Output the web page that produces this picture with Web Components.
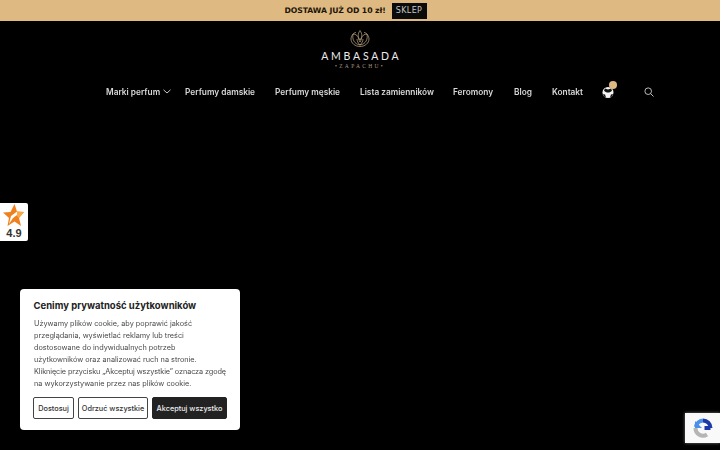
<!DOCTYPE html>
<html lang="pl"><head><meta charset="utf-8"><title>Ambasada Zapachu</title>
<style>
html,body{margin:0;padding:0;height:100%;background:#000;overflow:hidden}
body{font-family:"Inter","Liberation Sans",sans-serif}
</style></head><body>
<promo-bar></promo-bar>
<site-header></site-header>
<rating-badge></rating-badge>
<cookie-box></cookie-box>
<recaptcha-badge></recaptcha-badge>
<script>
function def(name,html){
  customElements.define(name,class extends HTMLElement{
    constructor(){super();this.attachShadow({mode:'open'}).innerHTML=html;}
  });
}
def('promo-bar',`<style>
:host{display:flex;height:21px;background:#dfb982;align-items:center;justify-content:center;gap:7px;padding-right:9px;font-family:"DejaVu Sans",sans-serif;color:#1b1408;box-sizing:border-box}
b{font-size:7.7px;width:100px;white-space:nowrap;letter-spacing:-.07px;font-weight:700}
span{display:flex;align-items:center;justify-content:center;width:35px;height:16px;background:#0b0b0b;color:#c4c4c4;font-size:8px;letter-spacing:.4px}
</style><b>DOSTAWA JUŻ OD 10 zł!</b><span>SKLEP</span>`);
def('site-header',`<style>
:host{display:block;color:#eee;font-family:"Inter","Liberation Sans",sans-serif}
.logo{display:flex;flex-direction:column;align-items:center;padding-top:8px;height:53px}
svg.mark{width:20px;height:19px;display:block}
.name{font-family:"Lato","Liberation Sans",sans-serif;font-weight:400;font-size:10.5px;letter-spacing:2.75px;margin-right:-2.75px;color:#ececec;line-height:12px;margin-top:2px}
.sub{font-family:"Liberation Serif",serif;font-size:5.500px;letter-spacing:2.3px;color:#a99a80;line-height:7px;margin-top:1px}
nav{display:flex;align-items:center;height:20px;padding-left:106px;font-size:8.3px;font-weight:600;white-space:nowrap;will-change:transform}
nav a{display:block;color:#d8d8d8}
.chev{width:8px;height:5px;margin:0 0 1px 3px;display:block}
.cart{position:relative;width:14px;height:14px;margin-left:18px}
.dot{position:absolute;left:7.500px;top:-4px;width:8px;height:8px;border-radius:50%;background:#dfb982}
.srch{width:10px;height:10px;margin-left:29px;margin-top:-1px}
</style>
<div class="logo">
<svg class="mark" viewBox="0 0 20 19" fill="none" stroke="#c7b08a" stroke-width=".7">
<path d="M10 1.500C7.500 5 7.500 9 10 13c2.500-4 2.500-8 0-11.500z"/>
<path d="M10 16C4 15 2 10 3 5c3 0 5 2 7 6 2-4 4-6 7-6 1 5-1 10-7 11z"/>
<path d="M6 3.500C3.500 3.500 1 7 1 10c0 4 4 7.500 9 7.500s9-3.500 9-7.500c0-3-2.500-6.500-5-6.500"/>
<path d="M10 16c-2-2-3-4-3-6M10 16c2-2 3-4 3-6"/>
</svg>
<div class="name">AMBASADA</div>
<div class="sub">•ZAPACHU•</div>
</div>
<nav>
<a style="width:54px">Marki perfum</a>
<svg class="chev" viewBox="0 0 8 5" fill="none" stroke="#ddd" stroke-width=".9"><path d="M.5 .8 4 4 7.500 .8"/></svg>
<a style="margin-left:14px;width:70px">Perfumy damskie</a>
<a style="margin-left:20px;width:65px">Perfumy męskie</a>
<a style="margin-left:20px;width:74px">Lista zamienników</a>
<a style="margin-left:19px;width:41px">Feromony</a>
<a style="margin-left:20px;width:18px">Blog</a>
<a style="margin-left:20px;width:31px">Kontakt</a>
<div class="cart"><svg viewBox="0 0 14 14" width="14" height="14"><circle cx="7" cy="7.500" r="5.500" fill="#f4f4f4"/><path d="M3 5.500c1 1.500 2.500 2 4 2s3-.5 4-2l-1-2-3 1-3-1zM2 9l2 .5 1 3-2-1zM12 9l-2 .5-1 3 2-1z" fill="#111"/></svg><span class="dot"></span></div>
<svg class="srch" viewBox="0 0 10 10" fill="none" stroke="#cfcfcf" stroke-width=".9"><circle cx="4.200" cy="4.200" r="3.300"/><path d="M6.700 6.700 9.500 9.500"/></svg>
</nav>`);
def('rating-badge',`<style>
:host{position:fixed;left:0;top:203px;width:28px;height:38px;background:#fff;border-radius:0 2px 2px 0;display:flex;flex-direction:column;align-items:center;font-family:"Liberation Sans",sans-serif}
svg{width:21px;height:22px;margin-top:1px;margin-left:-1px;display:block}
b{font-size:11px;line-height:12px;color:#333;margin-top:1px}
</style><svg viewBox="0 0 21 22"><path d="M11.500 0 14 7.500 21 8l-5 6 2 8-6.500-4.500L4.500 22 6 14 0 8.500l7.500-.5z" fill="#f0801e"/><path d="M6 20 8 12 14 7.500 16 9.500 10 14z" fill="#fff"/><path d="M14 7.500 21 8l-5 6-2-2z" fill="#f9a94a"/></svg><b>4.9</b>`);
def('cookie-box',`<style>
:host{position:fixed;left:20px;top:289px;width:220px;height:141px;box-sizing:border-box;background:#fff;border-radius:4px;padding:10px 13px 0 13px;font-family:"Inter","Liberation Sans",sans-serif;color:#444}
h2{margin:0 0 0 .5px;font-size:9.500px;line-height:14px;font-weight:700;color:#222;white-space:nowrap}
p{margin:5px 0 0 .5px;font-size:7.300px;line-height:12px;white-space:nowrap;color:#4a4a4a;will-change:transform}
i{font-style:normal;letter-spacing:-.1px}
.btns{display:flex;gap:4px;margin-top:7px}
</style><h2>Cenimy prywatność użytkowników</h2>
<p>Używamy plików cookie, aby poprawić jakość<br>przeglądania, wyświetlać reklamy lub treści<br>dostosowane do indywidualnych potrzeb<br>użytkowników oraz analizować ruch na stronie.<br><i>Kliknięcie przycisku „Akceptuj wszystkie” oznacza zgodę</i><br>na wykorzystywanie przez nas plików cookie.</p>
<div class="btns"><cookie-btn style="width:41px">Dostosuj</cookie-btn><cookie-btn style="width:70px">Odrzuć wszystkie</cookie-btn><cookie-btn dark style="width:75px">Akceptuj wszystko</cookie-btn></div>`);
def('cookie-btn',`<style>
:host{display:flex;align-items:center;justify-content:center;height:22px;box-sizing:border-box;border:1.500px solid #444;border-radius:2px;font-size:7.300px;font-weight:500;color:#333;white-space:nowrap;background:#fff}
:host([dark]){background:#222;border-color:#222;color:#eee}
</style><slot></slot>`);
def('recaptcha-badge',`<style>
:host{position:fixed;left:685px;top:413px;width:35px;height:30px;background:#f9f9f9;display:flex;align-items:center;justify-content:center;box-shadow:0 0 3px #777}
svg{width:20px;height:20px;display:block}
</style><svg viewBox="0 0 20 20" fill="none" stroke-width="4"><path d="M3 9A7.500 7.500 0 0 1 10 2.500" stroke="#4a90e8"/><path d="M10 2.500A7.500 7.500 0 0 1 17.500 10" stroke="#1c3aa9"/><path d="M17.500 10h-6" stroke="#1c3aa9"/><path d="M2.500 10A7.500 7.500 0 0 0 14 16.500" stroke="#b5b5b5"/><path d="M2 3v7h7" stroke="#4a90e8" stroke-width="0" fill="#4a90e8"/></svg>`);
</script></body></html>
